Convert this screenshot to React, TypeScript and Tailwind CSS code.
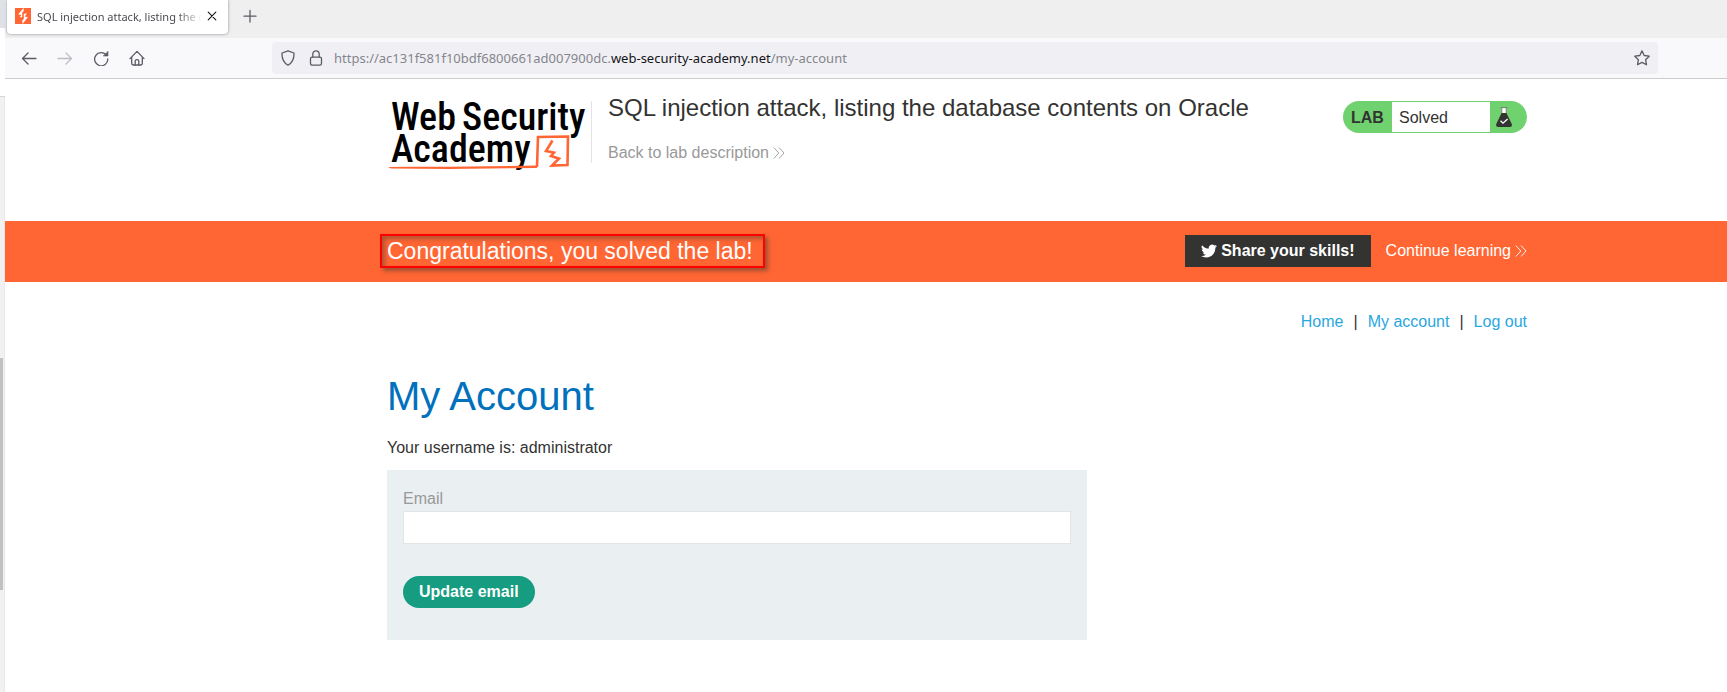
import { type ReactNode, type SVGProps } from 'react';

function Stroke({ children, ...props }: SVGProps<SVGSVGElement> & { children: ReactNode }) {
  return (
    <svg
      width="16"
      height="16"
      viewBox="0 0 16 16"
      fill="none"
      stroke="currentColor"
      strokeWidth="1.3"
      strokeLinecap="round"
      strokeLinejoin="round"
      aria-hidden="true"
      {...props}
    >
      {children}
    </svg>
  );
}

function Chevrons() {
  return (
    <svg width="12" height="12" viewBox="0 0 12 12" fill="none" stroke="currentColor" strokeWidth="0.9" aria-hidden="true">
      <path d="M0.8 0.5 L5.8 6 L0.8 11.5 M6 0.5 L11 6 L6 11.5" />
    </svg>
  );
}

function BackgroundWindowEdge() {
  return (
    <div className="flex w-[5px] shrink-0 flex-col" aria-hidden="true">
      <div className="h-7 bg-[#dee1e6]" />
      <div className="h-[69px] border-b border-[#d5d5d5] bg-white" />
      <div className="grow border-r border-[#e8e8e8] bg-[#f1f1f1] pt-[261px]">
        <div className="h-[232px] w-[3px] bg-[#c1c1c1]" />
      </div>
    </div>
  );
}

function TabStrip() {
  return (
    <div className="flex h-[38px] items-start bg-[#efefef] pl-0.5">
      <div className="flex h-[34px] w-[221px] items-center rounded-b bg-white pr-2.5 pl-2 pb-0.5 shadow-[0_0_3px_rgba(90,90,110,0.7)]">
        <svg className="shrink-0" width="16" height="16" viewBox="0 0 16 16" aria-hidden="true">
          <rect width="16" height="16" fill="#ff6633" />
          <path d="M8.6 0 L3.2 6.3 L6.2 7.1 L4.8 9.2 L7.2 9.2 L7.2 4.4 L8.6 3.2 Z M7.6 16 L12.8 9.3 L9.8 8.6 L11.9 5.6 L8.8 5.8 L8.8 11 L7.2 12.6 Z" fill="#fff" />
        </svg>
        <span className="ml-1.5 grow overflow-hidden pt-0.5 font-['Noto_Sans',sans-serif] text-[11px] whitespace-nowrap text-[#4a4a52] [mask-image:linear-gradient(to_right,#000_85%,transparent)]">
          SQL injection attack, listing the database
        </span>
        <button type="button" aria-label="Close tab" className="ml-1 shrink-0 text-[#15141a]">
          <Stroke width="12" height="12" viewBox="0 0 12 12" strokeWidth="1.1">
            <path d="M2.2 2.2 L9.8 9.8 M9.8 2.2 L2.2 9.8" />
          </Stroke>
        </button>
      </div>
      <button type="button" aria-label="New tab" className="ml-3.5 flex h-8 items-center text-[#5b5b66]">
        <Stroke>
          <path d="M8 2.5 V14 M2 8.2 H14" />
        </Stroke>
      </button>
    </div>
  );
}

function Toolbar() {
  return (
    <div className="flex h-[41px] items-center border-b border-[#cccccc] bg-[#f9f9fb] text-[#5b5b66]">
      <div className="flex w-[267px] shrink-0 items-center gap-5 pl-4">
        <button type="button" aria-label="Back">
          <Stroke><path d="M15 8.5 H1.5 M7 3 L1.5 8.5 L7 14" /></Stroke>
        </button>
        <button type="button" aria-label="Forward" className="text-[#bdbdc3]">
          <Stroke><path d="M1 8.5 H14.5 M9 3 L14.5 8.5 L9 14" /></Stroke>
        </button>
        <button type="button" aria-label="Reload">
          <Stroke>
            <path d="M13.6 5.4 A6.6 6.6 0 1 0 14.8 9" />
            <path d="M15 1.6 V6 H10.6 Z" fill="currentColor" strokeWidth="0.6" />
          </Stroke>
        </button>
        <button type="button" aria-label="Home">
          <Stroke>
            <path d="M1 8.6 L8 1.4 L15 8.6 M2.7 7.2 V13.6 Q2.7 15 4.1 15 H11.9 Q13.3 15 13.3 13.6 V7.2" />
            <path d="M6.2 15 V11 Q6.2 9.6 8 9.6 Q9.8 9.6 9.8 11 V15" />
          </Stroke>
        </button>
      </div>
      <div className="mr-[69px] flex h-8 grow items-center rounded bg-[#f0f0f4] px-2">
        <Stroke className="shrink-0">
          <path d="M8 0.8 L14 3 Q14.4 11.5 8 15.3 Q1.6 11.5 2 3 Z" />
        </Stroke>
        <Stroke className="ml-3 shrink-0">
          <rect x="2.5" y="7.2" width="11" height="8" rx="1.6" />
          <path d="M4.8 7 V4 A3.2 3.2 0 0 1 11.2 4 V7" />
        </Stroke>
        <span className="ml-2.5 grow pt-0.5 font-['Noto_Sans',sans-serif] text-[13px] whitespace-nowrap text-[#85858d]">
          https://ac131f581f10bdf6800661ad007900dc.<span className="text-[#15141a]">web-security-academy.net</span>/my-account
        </span>
        <button type="button" aria-label="Bookmark this page">
          <Stroke>
            <path d="M8 0.9 L10.2 5.5 L15.2 6.2 L11.6 9.7 L12.5 14.8 L8 12.4 L3.5 14.8 L4.4 9.7 L0.8 6.2 L5.8 5.5 Z" />
          </Stroke>
        </button>
      </div>
    </div>
  );
}

function AcademyLogo() {
  return (
    <svg className="shrink-0 overflow-visible" width="204" height="72" viewBox="0 0 204 72" role="img" aria-label="Web Security Academy">
      <g fill="#000" fontFamily="'Roboto Condensed', Roboto, sans-serif" fontWeight="500" fontSize="38">
        <text x="2" y="30">Web</text>
        <text x="73" y="30">Security</text>
        <text x="2" y="62">Academy</text>
      </g>
      <path d="M-1 67 L2 68.600 L60 69 L148 68 L148 65.600 L60 66.800 L20 66.800 Z" fill="#ff6633" />
      <path d="M148 67 L149 37 L179 36.5 L178.500 65 L163 65.500 L170 58.500 L162 56 L165 52.500 L157 51 L163.500 40.500" fill="none" stroke="#ff6633" strokeWidth="2.6" />
    </svg>
  );
}

function LabStatus() {
  return (
    <div className="flex h-8 w-46 shrink-0 items-center overflow-hidden rounded-full bg-[#6fd26f] py-px text-base text-[#333332]">
      <span className="w-[49px] pt-0.5 pl-2 font-bold">LAB</span>
      <span className="flex h-full w-[98px] items-center bg-white pt-0.5 pl-[7px]">Solved</span>
      <svg className="ml-1.5" width="16" height="20" viewBox="0 0 16 20" aria-hidden="true">
        <path d="M5.6 1 H10.4 V6 H5.6 Z" fill="#fff" />
        <path d="M4.6 0.6 H11.4 M5.8 1 V7 M10.2 1 V7" fill="none" stroke="#777" strokeWidth="0.9" />
        <path d="M5.6 6 H10.4 L16 17.4 Q16 20 14 20 H2 Q0 20 0 17.4 Z" fill="#333332" />
        <path d="M4.5 13.8 L7 16.2 L11.6 12" fill="none" stroke="#fff" strokeWidth="1.3" />
      </svg>
    </div>
  );
}

const container = 'ml-[382px] mr-[200px]';

function LabHeader() {
  return (
    <header className={container + ' flex h-[142px] items-start pt-[22px]'}>
      <a href="#academy" className="-mt-px ml-0.5 shrink-0">
        <AcademyLogo />
      </a>
      <div className="-ml-0.5 h-[62px] border-l border-[#e3e3e3] pl-4">
        <h2 className="-mt-2 text-2xl leading-[30px] text-[#333332]">
          SQL injection attack, listing the database contents on Oracle
        </h2>
        <a href="#description" className="mt-[18px] flex items-center gap-1 text-base leading-6 text-[#999999]">
          Back to lab description <Chevrons />
        </a>
      </div>
      <div className="ml-auto">
        <LabStatus />
      </div>
    </header>
  );
}

function SolvedBanner() {
  return (
    <section className="bg-[#ff6633] text-white">
      <div className={container + ' flex h-[61px] items-center pb-px'}>
        <div className="relative">
          <p className="text-[23px] leading-8">Congratulations, you solved the lab!</p>
          <div
            className="absolute -inset-y-px -right-3 -left-[7px] border-2 border-[#ff0000] shadow-[3px_3px_4px_rgba(80,60,50,0.55),inset_3px_3px_4px_rgba(80,60,50,0.45)]"
            aria-hidden="true"
          />
        </div>
        <button type="button" className="ml-auto flex h-8 items-center gap-1 bg-[#333332] px-4 font-bold">
          <svg width="16" height="16" viewBox="0 0 24 24" fill="currentColor" aria-hidden="true">
            <path d="M24 4.6a10 10 0 0 1-2.8.8 4.9 4.9 0 0 0 2.1-2.7 9.9 9.9 0 0 1-3.1 1.2 4.9 4.9 0 0 0-8.4 4.5A14 14 0 0 1 1.700 3.200a4.900 4.900 0 0 0 1.500 6.600 4.900 4.900 0 0 1-2.200-.6v.1a4.900 4.900 0 0 0 3.900 4.800 5 5 0 0 1-2.200.1 4.900 4.900 0 0 0 4.600 3.400A9.900 9.900 0 0 1 0 19.600a14 14 0 0 0 7.500 2.200c9.100 0 14-7.500 14-14v-.6A10 10 0 0 0 24 4.600z" />
          </svg>
          Share your skills!
        </button>
        <a href="#continue" className="ml-[15px] flex items-center gap-1">
          Continue learning <Chevrons />
        </a>
      </div>
    </section>
  );
}

function AccountNav() {
  return (
    <nav className="flex justify-end gap-2.5 pt-7 leading-6 text-[#29a7df]">
      <a href="#home">Home</a>
      <span className="text-[#333332]">|</span>
      <a href="#my-account">My account</a>
      <span className="text-[#333332]">|</span>
      <a href="#logout">Log out</a>
    </nav>
  );
}

function EmailForm() {
  return (
    <form className="mt-2.5 flex h-[170px] max-w-[700px] flex-col items-start bg-[#eaeff2] px-4 pt-[17px]" onSubmit={(e) => e.preventDefault()}>
      <label htmlFor="email" className="leading-6 text-[#999999]">
        Email
      </label>
      <input id="email" type="email" className="h-[33px] w-full border border-[#e3e5e5] bg-white px-2 outline-none" />
      <button type="submit" className="mt-8 h-8 rounded-full bg-[#169c80] px-4 font-bold text-white">
        Update email
      </button>
    </form>
  );
}

export default function App() {
  return (
    <div className="flex min-h-screen bg-white font-['Liberation_Sans',Arial,sans-serif] text-base text-[#333332]">
      <BackgroundWindowEdge />
      <div className="min-w-0 grow">
        <TabStrip />
        <Toolbar />
        <LabHeader />
        <SolvedBanner />
        <main className={container}>
          <AccountNav />
          <h1 className="mt-[38px] text-[40px] leading-12 text-[#0071bc]">My Account</h1>
          <p className="mt-4 leading-6">Your username is: administrator</p>
          <EmailForm />
        </main>
      </div>
    </div>
  );
}
